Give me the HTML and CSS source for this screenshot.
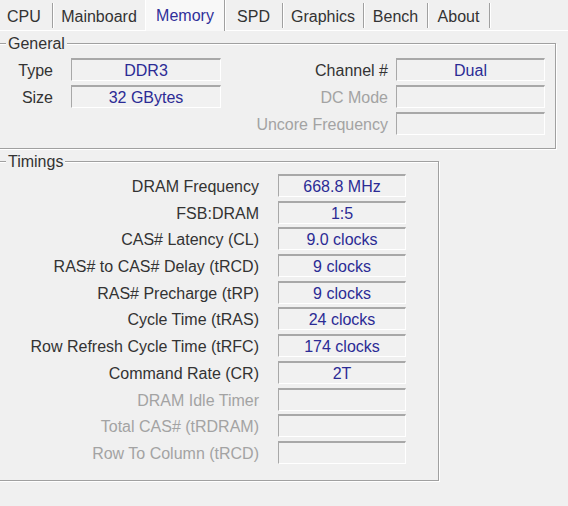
FILE: index.html
```html
<!DOCTYPE html>
<html lang="en">
<head>
<meta charset="utf-8">
<title>CPU-Z Memory</title>
<link rel="stylesheet" href="styles.css">
</head>
<body>
<div class="tabs">
  <div class="tab tab-cpu">CPU</div>
  <div class="tab tab-main no-sep">Mainboard</div>
  <div class="tab tab-mem active">Memory</div>
  <div class="tab tab-spd">SPD</div>
  <div class="tab tab-gfx">Graphics</div>
  <div class="tab tab-bench">Bench</div>
  <div class="tab tab-about">About</div>
</div>
<div class="panel">
  <div class="group general">
    <div class="group-title">General</div>
    <div class="general-body">
      <div class="gcol gcol-left">
        <div class="label">Type</div><div class="field">DDR3</div>
        <div class="label">Size</div><div class="field">32 GBytes</div>
      </div>
      <div class="gcol gcol-right">
        <div class="label">Channel #</div><div class="field">Dual</div>
        <div class="label off">DC Mode</div><div class="field"></div>
        <div class="label off">Uncore Frequency</div><div class="field"></div>
      </div>
    </div>
  </div>
  <div class="group timings">
    <div class="group-title">Timings</div>
    <div class="tgrid">
      <div class="label">DRAM Frequency</div><div class="field">668.8 MHz</div>
      <div class="label">FSB:DRAM</div><div class="field">1:5</div>
      <div class="label">CAS# Latency (CL)</div><div class="field">9.0 clocks</div>
      <div class="label">RAS# to CAS# Delay (tRCD)</div><div class="field">9 clocks</div>
      <div class="label">RAS# Precharge (tRP)</div><div class="field">9 clocks</div>
      <div class="label">Cycle Time (tRAS)</div><div class="field">24 clocks</div>
      <div class="label">Row Refresh Cycle Time (tRFC)</div><div class="field">174 clocks</div>
      <div class="label">Command Rate (CR)</div><div class="field">2T</div>
      <div class="label off">DRAM Idle Timer</div><div class="field"></div>
      <div class="label off">Total CAS# (tRDRAM)</div><div class="field"></div>
      <div class="label off">Row To Column (tRCD)</div><div class="field"></div>
    </div>
  </div>
</div>
</body>
</html>
```
FILE: styles.css
```css
* { box-sizing: border-box; }
html, body {
  margin: 0;
  padding: 0;
  background: #f0f0f0;
}
body {
  width: 568px;
  height: 506px;
  overflow: hidden;
  font-family: "Liberation Sans", Arial, sans-serif;
  font-size: 16px;
  color: #333333;
}

/* tabs */
.tabs {
  display: flex;
  align-items: flex-start;
  height: 31px;
  border-bottom: 1px solid #ffffff;
}
.tab {
  margin-top: 3px;
  height: 25px;
  line-height: 27px;
  text-align: center;
  white-space: nowrap;
  border-right: 1px solid #a0a0a0;
  box-shadow: 1px 0 0 #ffffff;
  color: #333333;
}
.tab.no-sep { border-right: none; box-shadow: none; }
.tab.active {
  margin-top: 0;
  height: 31px;
  line-height: 32px;
  background: #f8f8f8;
  border-left: 1px solid #ffffff;
  color: #30309a;
  position: relative;
  z-index: 1;
}
.tab-cpu { width: 53px; text-align: left; padding-left: 7px; }
.tab-main { width: 92px; }
.tab-mem { width: 80px; }
.tab-spd { width: 58px; }
.tab-gfx { width: 81px; }
.tab-bench { width: 64px; }
.tab-about { width: 62px; }

/* groups */
.group {
  position: relative;
  margin-left: -2px;
  border: 1px solid #a0a0a0;
  box-shadow: 1px 1px 0 #ffffff, inset 1px 1px 0 #ffffff;
}
.group-title {
  position: absolute;
  top: -9px;
  left: 7px;
  padding: 0 2px;
  line-height: 18px;
  background: #f0f0f0;
  color: #333333;
}
.general {
  margin-top: 12px;
  width: 558px;
  height: 106px;
  padding-top: 14px;
}
.general-body {
  display: flex;
  align-items: flex-start;
}
.gcol {
  display: grid;
  grid-auto-rows: 23px;
  row-gap: 4px;
  align-items: center;
}
.gcol-left {
  grid-template-columns: 54px 150px;
  column-gap: 18px;
}
.gcol-right {
  grid-template-columns: auto 149px;
  column-gap: 8px;
  margin-left: auto;
  margin-right: 10px;
}
.timings {
  margin-top: 12px;
  width: 441px;
  height: 320px;
  padding-top: 12px;
}
.tgrid {
  display: grid;
  grid-template-columns: 260px 128px;
  column-gap: 19px;
  grid-auto-rows: 23px;
  row-gap: 3.7px;
  align-items: center;
}

.label {
  text-align: right;
  white-space: nowrap;
  color: #333333;
  line-height: 20px;
  padding-top: 3px;
}
.label.off { color: #a3a3a3; }
.field {
  height: 23px;
  line-height: 21px;
  text-align: center;
  white-space: nowrap;
  color: #2b2b95;
  background: #f1f1f1;
  border-top: 2px solid #a8a8a8;
  border-left: 1px solid #a8a8a8;
  border-bottom: 1px solid #ffffff;
  border-right: 1px solid #ffffff;
}
```
